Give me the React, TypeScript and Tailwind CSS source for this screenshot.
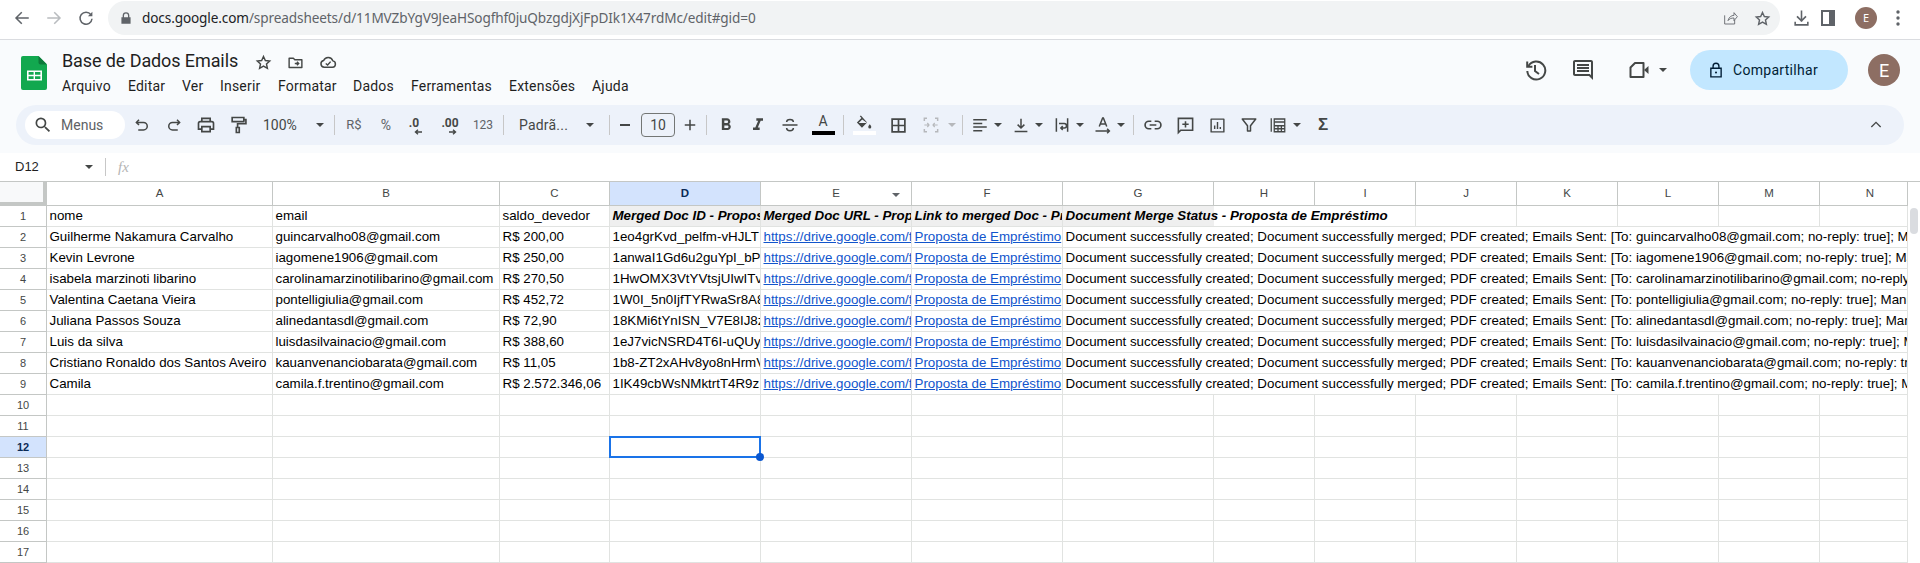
import React from "react";

type IP = { className?: string; children: React.ReactNode; vb?: string; sw?: number };
const S = ({ className = "w-[18px] h-[18px]", children, vb = "0 0 24 24", sw = 2 }: IP) => (
  <svg viewBox={vb} fill="none" stroke="currentColor" strokeWidth={sw} strokeLinecap="square" className={className}>{children}</svg>
);
const Caret = ({ c = "text-[#444746]" }: { c?: string }) => (
  <svg viewBox="0 0 8 4" className={`w-[8px] h-[4px] shrink-0 ${c}`}><path d="M0 0h8L4 4z" fill="currentColor" /></svg>
);
const Btn = ({ className, children }: { className: string; children: React.ReactNode }) => (
  <div className={`flex items-center justify-center shrink-0 h-full ${className}`}>{children}</div>
);
const Sep = ({ className }: { className: string }) => (
  <div className={`flex items-center justify-center shrink-0 h-full ${className}`}><div className="w-px h-[20px] bg-[#c7c7c7]" /></div>
);

const cols = "grid grid-cols-[47px_226px_227px_110px_151px_151px_151px_151px_101px_101px_101px_101px_101px_101px_88px]";
const cell = "border-r border-b border-[#e1e3e1] h-[21px] pl-[2.5px] pr-px overflow-hidden whitespace-nowrap text-[13.33px] leading-[20px] text-black";
const rh = "border-r border-b border-[#c4c7c5] h-[21px] flex items-center justify-center text-[11px] text-[#444746] bg-white";
const ch = "border-r border-b border-[#c4c7c5] h-[24px] flex items-center justify-center text-[11.5px] text-[#444746]";

const data = [
  ["Guilherme Nakamura Carvalho", "guincarvalho08@gmail.com", "R$ 200,00", "1eo4grKvd_pelfm-vHJLT", "guincarvalho08@gmail.com; no-reply: true]; Manual"],
  ["Kevin Levrone", "iagomene1906@gmail.com", "R$ 250,00", "1anwaI1Gd6u2guYpI_bP", "iagomene1906@gmail.com; no-reply: true]; Manual"],
  ["isabela marzinoti libarino", "carolinamarzinotilibarino@gmail.com", "R$ 270,50", "1HwOMX3VtYVtsjUIwITv", "carolinamarzinotilibarino@gmail.com; no-reply: true]; Manual"],
  ["Valentina Caetana Vieira", "pontelligiulia@gmail.com", "R$ 452,72", "1W0I_5n0IjfTYRwaSr8A8", "pontelligiulia@gmail.com; no-reply: true]; Manual"],
  ["Juliana Passos Souza", "alinedantasdl@gmail.com", "R$ 72,90", "18KMi6tYnISN_V7E8IJ8z", "alinedantasdl@gmail.com; no-reply: true]; Manual"],
  ["Luis da silva", "luisdasilvainacio@gmail.com", "R$ 388,60", "1eJ7vicNSRD4T6I-uQUy", "luisdasilvainacio@gmail.com; no-reply: true]; Manual"],
  ["Cristiano Ronaldo dos Santos Aveiro", "kauanvenanciobarata@gmail.com", "R$ 11,05", "1b8-ZT2xAHv8yo8nHrmV", "kauanvenanciobarata@gmail.com; no-reply: true]; Manual"],
  ["Camila", "camila.f.trentino@gmail.com", "R$ 2.572.346,06", "1IK49cbWsNMktrtT4R9z", "camila.f.trentino@gmail.com; no-reply: true]; Manual"],
];
const hdr = ["A", "B", "C", "D", "E", "F", "G", "H", "I", "J", "K", "L", "M", "N"];
const menus: [string, string][] = [["Arquivo", "w-[66px]"], ["Editar", "w-[54px]"], ["Ver", "w-[38px]"], ["Inserir", "w-[58px]"], ["Formatar", "w-[75px]"], ["Dados", "w-[58px]"], ["Ferramentas", "w-[98px]"], ["Extensões", "w-[83px]"], ["Ajuda", "w-[50px]"]];

function Chrome() {
  return (
    <div className="h-[40px] bg-white border-b border-[#dadce0] flex items-start shrink-0 pt-px" style={{ fontFamily: "'Noto Sans', sans-serif" }}>
      <div className="flex items-center h-[34px] w-[108px] shrink-0 text-[#5f6368]">
        <Btn className="w-[44px]"><S className="w-[18px] h-[18px]"><path d="M20 12H5M11 5l-7 7 7 7" /></S></Btn>
        <Btn className="w-[20px] text-[#b9bcbf]"><S className="w-[18px] h-[18px]"><path d="M4 12h15M13 5l7 7-7 7" /></S></Btn>
        <Btn className="w-[44px]"><S className="w-[18px] h-[18px]"><path d="M18.5 7.5A8 8 0 1 0 20 13" strokeLinecap="butt" /><path d="M20.5 3.5v6h-6z" fill="currentColor" stroke="none" /></S></Btn>
      </div>
      <div className="w-[1672px] h-[34px] rounded-full bg-[#f1f3f4] flex items-center shrink-0">
        <svg viewBox="0 0 12 14" className="w-[10px] h-[12px] ml-[13px] text-[#5f6368]"><path d="M2 6V4a4 4 0 0 1 8 0v2h1.5v8H.5V6zm1.6 0h4.8V4a2.4 2.4 0 0 0-4.8 0z" fill="currentColor" /></svg>
        <div className="ml-[11px] text-[13.6px] leading-[20px] tracking-[-0.12px] text-[#5f6368] whitespace-nowrap">
          <span className="text-[#202124]">docs.google.com</span>/spreadsheets/d/11MVZbYgV9JeaHSogfhf0juQbzgdjXjFpDIk1X47rdMc/edit#gid=0
        </div>
        <div className="ml-auto flex items-center text-[#5f6368]">
          <S className="w-[16px] h-[16px] mr-[16px]" sw={1.3}><path d="M4 8v13h15v-6M9 16c1-5 5-8 9-8V4l5 6-5 6v-4c-4 0-7 1-9 4z" strokeLinecap="butt" /></S>
          <svg viewBox="0 0 24 24" className="w-[17px] h-[17px] mr-[9px]" fill="none" stroke="currentColor" strokeWidth="2"><path d="M12 3.5l2.6 5.7 6.2.7-4.6 4.2 1.3 6.1L12 17l-5.5 3.2 1.3-6.1-4.6-4.2 6.2-.7z" /></svg>
        </div>
      </div>
      <div className="flex-1 flex items-center h-[34px] text-[#5f6368]">
        <S className="w-[19px] h-[19px] ml-[12px]"><path d="M12 3v12M7 10l5 5 5-5M4 17v3h16v-3" /></S>
        <svg viewBox="0 0 14 16" className="w-[14px] h-[16px] ml-[10px]"><path d="M0 0h14v16H0zM2 2v12h6V2z" fill="currentColor" fillRule="evenodd" /></svg>
        <div className="w-[22px] h-[22px] rounded-full bg-[#8d6e63] ml-[20px] flex items-center justify-center text-white text-[11px]">E</div>
        <svg viewBox="0 0 4 16" className="w-[4px] h-[16px] ml-[19px]"><g fill="currentColor"><circle cx="2" cy="2" r="1.7" /><circle cx="2" cy="8" r="1.7" /><circle cx="2" cy="14" r="1.7" /></g></svg>
      </div>
    </div>
  );
}

function Header() {
  return (
    <div className="h-[65px] flex shrink-0 pl-[21px]">
      <svg viewBox="0 0 26 34" className="w-[26px] h-[34px] mt-[16px] shrink-0">
        <path d="M2 0h15.5L26 8.5V32a2 2 0 0 1-2 2H2a2 2 0 0 1-2-2V2a2 2 0 0 1 2-2z" fill="#12a84f" />
        <path d="M17.5 0L26 8.5h-6.5a2 2 0 0 1-2-2z" fill="#0c7a3a" />
        <path d="M6 14.5h15v10H6zM7.6 16v2.8h5V16zm6.4 0v2.8h5.4V16zM7.6 20.2V23h5v-2.8zm6.4 0V23h5.4v-2.8z" fill="#fff" fillRule="evenodd" />
      </svg>
      <div className="ml-[15px] pt-[9px]">
        <div className="flex items-center h-[24px] text-[#1f1f1f]">
          <span className="text-[18px] leading-[24px] tracking-[-0.1px]">Base de Dados Emails</span>
          <svg viewBox="0 0 24 24" className="w-[17px] h-[17px] ml-[17px] text-[#444746] mt-[2px]" fill="none" stroke="currentColor" strokeWidth="2"><path d="M12 3.5l2.6 5.7 6.2.7-4.6 4.2 1.3 6.1L12 17l-5.5 3.2 1.3-6.1-4.6-4.2 6.2-.7z" /></svg>
          <S className="w-[17px] h-[17px] ml-[15px] text-[#444746] mt-[2px]"><path d="M3 6h6l2 2h10v11H3z" strokeLinejoin="round" /><path d="M11 13.5h5M14 11l2.5 2.5L14 16" strokeLinecap="butt" /></S>
          <S className="w-[18px] h-[18px] ml-[15px] text-[#444746] mt-[2px]"><path d="M7 19a4.5 4.5 0 0 1-.8-8.9A6.5 6.5 0 0 1 18.4 10.5 4.3 4.3 0 0 1 18 19z" strokeLinejoin="round" /><path d="M9 14l2.5 2 4-4.5" strokeLinecap="butt" /></S>
        </div>
        <div className="flex mt-[3px] h-[20px] items-center text-[14px] leading-[20px] text-[#1f1f1f] tracking-[0.2px]">
          {menus.map(([m, w]) => <div key={m} className={w}>{m}</div>)}
        </div>
      </div>
      <div className="ml-auto flex items-center h-[40px] mt-[10px] pr-[20px]">
        <Btn className="w-[24px] text-[#444746]"><S className="w-[24px] h-[24px]"><path d="M5.5 8a9 9 0 1 1-1.2 5" strokeLinecap="butt" /><path d="M4.2 3.5v5.2h5.2" strokeLinecap="butt" /><path d="M12 7v6l4 3" strokeLinecap="butt" /></S></Btn>
        <Btn className="w-[24px] ml-[24px] text-[#444746]">
          <svg viewBox="0 0 24 24" className="w-[26px] h-[26px]"><path fill="currentColor" d="M21.99 4c0-1.1-.89-2-1.99-2H4c-1.1 0-2 .9-2 2v12c0 1.1.9 2 2 2h14l4 4-.01-18zM20 4v13.17L18.83 16H4V4h16zM6 12h12v2H6zm0-3h12v2H6zm0-3h12v2H6z" /></svg>
        </Btn>
        <Btn className="w-[24px] ml-[32px] text-[#444746]"><S className="w-[24px] h-[24px]"><path d="M8 5H16.5V19H3.5V9.5z" strokeLinejoin="round" strokeLinecap="butt" /><path d="M17 12l4.5-4v8z" fill="currentColor" stroke="none" /></S></Btn>
        <Btn className="w-[8px] ml-[8px]"><Caret /></Btn>
        <div className="w-[158px] h-[40px] ml-[23px] rounded-full bg-[#c2e7ff] flex items-center text-[#001d35]">
          <svg viewBox="0 0 14 18" className="w-[12px] h-[16px] ml-[20px]" fill="none" stroke="currentColor" strokeWidth="1.6"><path d="M1 7h12v10H1zM3.6 7V4.5a3.4 3.4 0 0 1 6.8 0V7" /><circle cx="7" cy="12" r="1.2" fill="currentColor" stroke="none" /></svg>
          <span className="ml-[11px] text-[14px] tracking-[0.3px]">Compartilhar</span>
        </div>
        <div className="w-[32px] h-[32px] ml-[20px] rounded-full bg-[#8d6e63] flex items-center justify-center text-white text-[18px]">E</div>
      </div>
    </div>
  );
}

function Toolbar() {
  const g = "text-[#444746]";
  return (
    <div className="mx-[16px] h-[40px] rounded-full bg-[#edf2fa] flex items-center pl-[9px] shrink-0 text-[#444746]">
      <div className="w-[100px] h-[28px] rounded-full bg-white flex items-center shrink-0">
        <svg viewBox="0 0 24 24" className="w-[20px] h-[20px] ml-[8px]"><path fill="currentColor" d="M15.5 14h-.79l-.28-.27A6.471 6.471 0 0 0 16 9.5 6.5 6.5 0 1 0 9.5 16c1.61 0 3.09-.59 4.23-1.57l.27.28v.79l5 4.99L20.49 19l-4.99-5zm-6 0C7.01 14 5 11.99 5 9.5S7.01 5 9.5 5 14 7.01 14 9.5 11.99 14 9.5 14z" /></svg>
        <span className="ml-[8px] text-[14px] text-[#5e6265]">Menus</span>
      </div>
      <Btn className={`w-[33px] ${g}`}><S className="w-[18px] h-[18px]"><path d="M8 5L4.5 8.5 8 12" strokeLinecap="butt" /><path d="M5 8.5h9a5 5 0 0 1 0 10H7" strokeLinecap="butt" /></S></Btn>
      <Btn className={`w-[31px] ${g}`}><S className="w-[18px] h-[18px]"><path d="M16 5l3.5 3.5L16 12" strokeLinecap="butt" /><path d="M19 8.5h-9a5 5 0 0 0 0 10h7" strokeLinecap="butt" /></S></Btn>
      <Btn className={`w-[33px] ${g}`}><S className="w-[20px] h-[20px]"><path d="M7 8V4h10v4M7 17H3v-7a2 2 0 0 1 2-2h14a2 2 0 0 1 2 2v7h-4" strokeLinecap="butt" /><path d="M7 14h10v6H7z" strokeLinecap="butt" /></S></Btn>
      <Btn className={`w-[31px] ${g}`}><S className="w-[20px] h-[20px]"><path d="M5 3h14v5H5zM19 5.5h2.5v5H11.5V15" strokeLinecap="butt" /><path d="M10 15h3.5v6H10z" strokeLinecap="butt" /></S></Btn>
      <div className="w-[77px] h-full flex items-center shrink-0">
        <span className="ml-[10px] text-[14px] w-[53px]">100%</span><Caret />
      </div>
      <Sep className="w-[8px]" />
      <Btn className="w-[32px] text-[13px] text-[#5f6368]">R$</Btn>
      <Btn className="w-[32px] text-[14px] text-[#5f6368]">%</Btn>
      <Btn className="w-[26px] flex-col">
        <span className="text-[12px] font-bold leading-[11px] mt-[2px] -ml-[2px]">.0</span>
        <svg viewBox="0 0 8 6" className="w-[8px] h-[6px] ml-[6px]"><path d="M8 3H2M4 .8L1.5 3 4 5.2" fill="none" stroke="currentColor" strokeWidth="1.4" /></svg>
      </Btn>
      <Btn className="w-[44px] flex-col">
        <span className="text-[12px] font-bold leading-[11px] mt-[2px]">.00</span>
        <svg viewBox="0 0 8 6" className="w-[8px] h-[6px] ml-[6px]"><path d="M0 3h6M4 .8L6.5 3 4 5.2" fill="none" stroke="currentColor" strokeWidth="1.4" /></svg>
      </Btn>
      <Btn className="w-[22px] text-[12px] text-[#5f6368]">123</Btn>
      <Sep className="w-[18px]" />
      <div className="w-[88px] h-full flex items-center shrink-0">
        <span className="ml-[7px] w-[67px] text-[14px] tracking-[0.2px]">Padrã...</span><Caret />
      </div>
      <Sep className="w-[18px]" />
      <Btn className="w-[14px]"><div className="w-[10px] h-[2px] bg-[#444746]" /></Btn>
      <div className="ml-[9px] w-[34px] h-[24px] rounded-[4px] border border-[#747775] flex items-center justify-center text-[14px] shrink-0">10</div>
      <Btn className="w-[30px]"><S className="w-[14px] h-[14px]" sw={2.6}><path d="M12 3v18M3 12h18" strokeLinecap="butt" /></S></Btn>
      <Sep className="w-[3px]" />
      <Btn className="w-[36px]"><svg viewBox="0 0 24 24" className="w-[20px] h-[20px]"><path fill="currentColor" d="M15.6 10.79c.97-.67 1.65-1.77 1.65-2.79 0-2.26-1.75-4-4-4H7v14h7.04c2.09 0 3.71-1.7 3.71-3.79 0-1.52-.86-2.82-2.15-3.42zM10 6.5h3c.83 0 1.5.67 1.5 1.5s-.67 1.5-1.5 1.5h-3v-3zm3.5 9H10v-3h3.5c.83 0 1.5.67 1.5 1.5s-.67 1.5-1.5 1.5z" /></svg></Btn>
      <Btn className="w-[28px]"><svg viewBox="0 0 24 24" className="w-[20px] h-[20px]"><path fill="currentColor" d="M10 4v3h2.21l-3.42 8H6v3h8v-3h-2.21l3.42-8H18V4z" /></svg></Btn>
      <Btn className="w-[36px]"><S className="w-[18px] h-[18px]"><path d="M2 12h20M7.5 8c0-2 2-3.5 4.5-3.5S16.5 6 16.5 8M7.5 16c0 2 2 3.5 4.5 3.5s4.5-1.5 4.5-3.5" strokeLinecap="butt" /></S></Btn>
      <div className="w-[30px] h-full flex flex-col items-center justify-end pb-[10px] shrink-0">
        <span className="text-[14px] leading-[14px]">A</span>
        <div className="w-[23px] h-[4px] bg-black mt-[3px]" />
      </div>
      <Sep className="w-[10px]" />
      <div className="w-[32px] h-full flex flex-col items-center justify-end pb-[10px] shrink-0">
        <svg viewBox="0 0 18 16" className="w-[16px] h-[15px]"><path fill="currentColor" d="M5.5 0L4.3 1l1.8 2L1 8l5.7 6 5.8-6zM12.5 8.7H3l4-4zM15.5 10s-1.7 2-1.7 3a1.7 1.7 0 0 0 3.4 0c0-1-1.7-3-1.7-3z" /></svg>
        <div className="w-[23px] h-[4px] bg-white mt-[1px]" />
      </div>
      <Btn className="w-[36px]"><S className="w-[17px] h-[17px]" sw={2.4}><path d="M3 3h18v18H3zM12 3v18M3 12h18" strokeLinecap="butt" /></S></Btn>
      <Btn className="w-[30px] text-[#b6b8bb]"><S className="w-[16px] h-[16px]" sw={2.2}><path d="M2 6V2h4M18 2h4v4M2 18v4h4M22 18v4h-4M10 2h0M14 2h0M10 22h0M14 22h0" strokeLinecap="butt" /><path d="M2 12h7M6.5 9L9 12l-2.5 3M22 12h-7M17.5 9L15 12l2.5 3" strokeLinecap="butt" strokeWidth="1.8" /></S></Btn>
      <Btn className="w-[12px]"><Caret c="text-[#b6b8bb]" /></Btn>
      <Sep className="w-[8px]" />
      <S className="w-[18px] h-[18px] ml-[5px] shrink-0" sw={2}><path d="M3 5h18M3 10h12M3 14.5h18M3 19.5h12" strokeLinecap="butt" /></S>
      <Btn className="w-[8px] ml-[5px]"><Caret /></Btn>
      <S className="w-[18px] h-[18px] ml-[10px] shrink-0"><path d="M12 3.5v12M7.5 11.5L12 16l4.5-4.5M3.5 20.5h17" strokeLinecap="butt" /></S>
      <Btn className="w-[8px] ml-[5px]"><Caret /></Btn>
      <S className="w-[18px] h-[18px] ml-[10px] shrink-0"><path d="M4.5 3v18M19.5 3v18M8 10h7a3 3 0 0 1 0 6h-4M13 13.5L10.5 16l2.5 2.5" strokeLinecap="butt" /></S>
      <Btn className="w-[8px] ml-[5px]"><Caret /></Btn>
      <S className="w-[18px] h-[18px] ml-[10px] shrink-0"><path d="M7 14L11.5 2.5h1L17 14M8.5 10.5h7M2 20h18M17.5 17l3 3-3 3" strokeLinecap="butt" /></S>
      <Btn className="w-[8px] ml-[5px]"><Caret /></Btn>
      <Sep className="w-[16px]" />
      <Btn className="w-[24px]"><S className="w-[20px] h-[20px]"><path d="M10 7.5H7a4.5 4.5 0 0 0 0 9h3M14 7.5h3a4.5 4.5 0 0 1 0 9h-3M8 12h8" strokeLinecap="butt" /></S></Btn>
      <Btn className="w-[24px] ml-[8px]"><S className="w-[19px] h-[19px]"><path d="M3 3h18v15H6l-3 3zM12 6.5v8M8 10.5h8" strokeLinecap="butt" /></S></Btn>
      <Btn className="w-[24px] ml-[8px]"><S className="w-[17px] h-[17px]"><path d="M3 3h18v18H3z" strokeLinejoin="round" /><path d="M8 17v-5M12 17V7M16 17v-3" strokeLinecap="butt" /></S></Btn>
      <Btn className="w-[24px] ml-[8px]"><S className="w-[18px] h-[18px]"><path d="M3 4h18l-7 9v7h-4v-7z" strokeLinejoin="round" /></S></Btn>
      <Btn className="w-[20px] ml-[7px]"><S className="w-[18px] h-[18px]" sw={1.7}><path d="M7 4h14v17H7zM3 3v18" strokeLinecap="butt" /><path d="M7 8h14M7 13h14M7 17h14M12 13v8M16.5 13v8" strokeLinecap="butt" /></S></Btn>
      <Btn className="w-[8px] ml-[5px]"><Caret /></Btn>
      <Btn className="w-[10px] ml-[17px] font-bold text-[17px]"><span style={{ fontFamily: "'Liberation Sans', sans-serif" }}>Σ</span></Btn>
      <Btn className="w-[16px] ml-auto mr-[20px]"><S className="w-[18px] h-[18px]"><path d="M5 15l7-7 7 7" strokeLinecap="butt" /></S></Btn>
    </div>
  );
}

function Formula() {
  return (
    <div className="h-[28px] bg-white flex items-center shrink-0 text-[#1f1f1f]">
      <span className="ml-[15px] w-[70px] text-[13px]" style={{ fontFamily: "'Liberation Sans', sans-serif" }}>D12</span>
      <Caret />
      <div className="ml-[12px] w-px h-[18px] bg-[#c7c7c7]" />
      <span className="ml-[12px] text-[15px] italic text-[#b4b4b4]" style={{ fontFamily: "'Liberation Serif', serif" }}>fx</span>
    </div>
  );
}

function Row({ n, d }: { n: number; d?: string[] }) {
  const sel = n === 12;
  return (
    <div className={cols}>
      <div className={`${rh} ${sel ? "!bg-[#d3e3fd] font-bold !text-[#0b2a55]" : ""}`}>{n}</div>
      {d ? (
        <>
          <div className={cell}>{d[0]}</div>
          <div className={cell}>{d[1]}</div>
          <div className={cell}>{d[2]}</div>
          <div className={cell}>{d[3]}</div>
          <div className={`${cell} !text-[#1155cc] underline`}>https://drive.google.com/file</div>
          <div className={`${cell} !text-[#1155cc] underline`}>Proposta de Empréstimo</div>
          <div className={`${cell} col-span-8`}>Document successfully created; Document successfully merged; PDF created; Emails Sent: [To: {d[4]}</div>
        </>
      ) : (
        hdr.map((h) =>
          sel && h === "D" ? (
            <div key={h} className="relative h-[22px] -mt-px border-2 border-[#1a73e8] -ml-px w-[152px]">
              <div className="absolute -right-[5px] -bottom-[5px] w-[8px] h-[8px] rounded-full bg-[#0b57d0]" />
            </div>
          ) : (
            <div key={h} className={cell} />
          )
        )
      )}
    </div>
  );
}

function Grid() {
  const bi = "font-bold italic bg-[#efefef]";
  return (
    <div className="flex-1 flex border-t border-[#c4c7c5] min-h-0 bg-white" style={{ fontFamily: "'Liberation Sans', Arial, sans-serif" }}>
      <div className="w-[1908px] shrink-0">
        <div className={cols}>
          <div className="h-[24px] bg-[#f8f9fa] border-r-[4px] border-b-[4px] border-[#c4c7c5]" />
          {hdr.map((h) => (
            <div key={h} className={`${ch} relative ${h === "D" ? "bg-[#d3e3fd] font-bold !text-[#0b2a55]" : ""} ${h === "N" ? "pl-[13px]" : ""}`}>
              {h}
              {h === "E" && <span className="absolute right-[11px] top-[11px] flex"><Caret c="text-[#5f6368]" /></span>}
            </div>
          ))}
        </div>
        <div className={cols}>
          <div className={rh}>1</div>
          <div className={cell}>nome</div>
          <div className={cell}>email</div>
          <div className={cell}>saldo_devedor</div>
          <div className={`${cell} ${bi}`}>Merged Doc ID - Proposta de Empréstimo</div>
          <div className={`${cell} ${bi}`}>Merged Doc URL - Proposta de Empréstimo</div>
          <div className={`${cell} ${bi}`}>Link to merged Doc - Proposta de Empréstimo</div>
          <div className={`${cell} col-span-3 font-bold italic bg-[linear-gradient(90deg,#efefef_151px,transparent_151px)]`}>Document Merge Status - Proposta de Empréstimo</div>
          <div className={cell} /><div className={cell} /><div className={cell} /><div className={cell} /><div className={cell} />
        </div>
        {data.map((d, i) => <Row key={i} n={i + 2} d={d} />)}
        {[10, 11, 12, 13, 14, 15, 16, 17].map((n) => <Row key={n} n={n} />)}
      </div>
      <div className="flex-1 pt-[2px] flex justify-center">
        <div className="w-[8px] h-[26px] mt-[24px] rounded-full bg-[#dadce0]" />
      </div>
    </div>
  );
}

export default function App() {
  return (
    <div className="w-[1920px] h-[563px] overflow-hidden flex flex-col bg-[#f9fbfd]" style={{ fontFamily: "Roboto, sans-serif" }}>
      <Chrome />
      <Header />
      <Toolbar />
      <div className="h-[8px] shrink-0" />
      <Formula />
      <Grid />
    </div>
  );
}
